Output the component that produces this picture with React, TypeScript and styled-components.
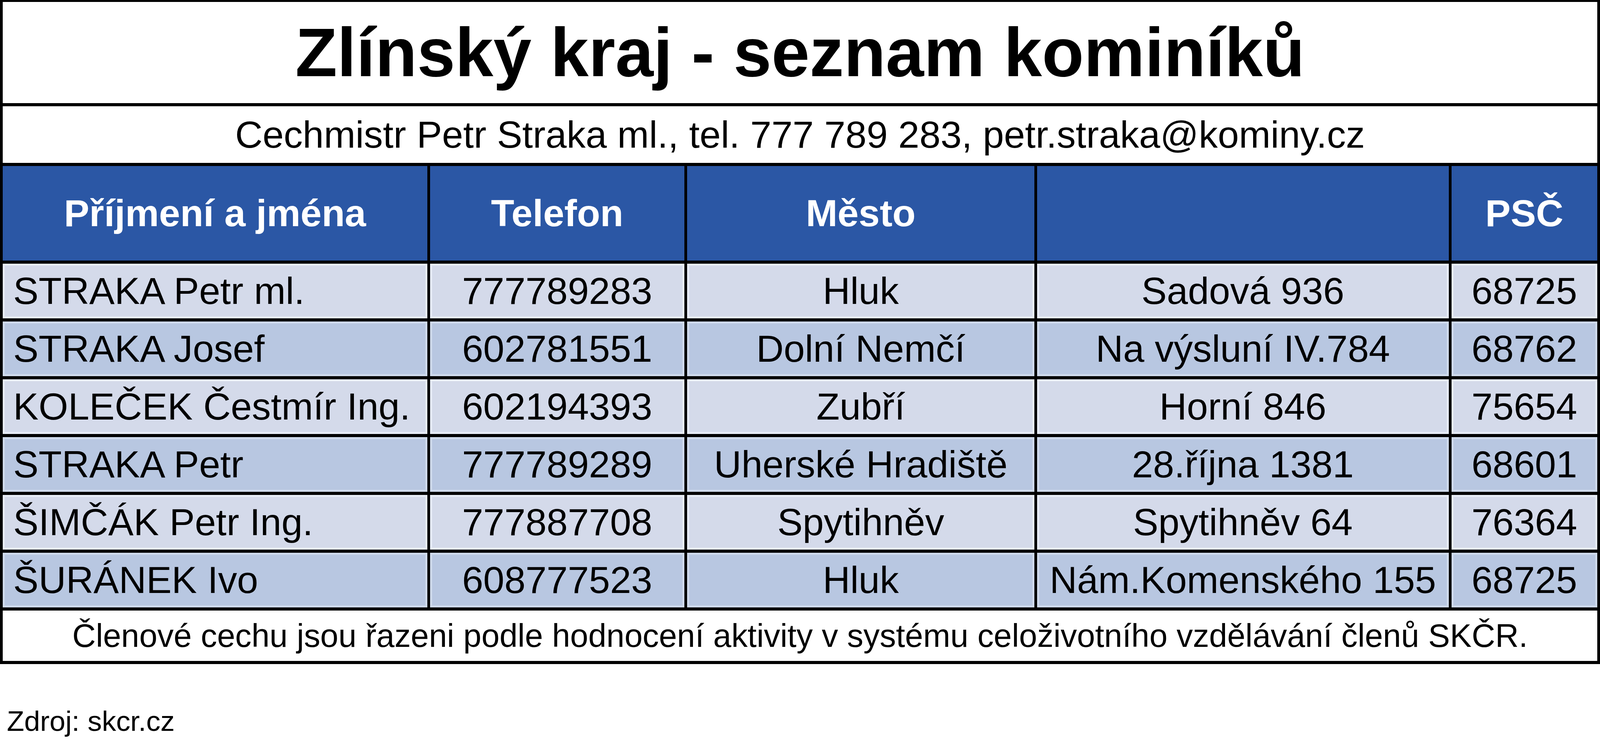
import React from "react";
import styled, { createGlobalStyle } from "styled-components";

// Reference frame is 4715 x 1920; sizes scale with the viewport.
const vw = (px: number) => `${((px / 4715) * 100).toFixed(4)}vw`;
const vh = (px: number) => `${((px / 1920) * 100).toFixed(4)}vh`;

const GlobalStyle = createGlobalStyle`
  html, body {
    margin: 0;
    padding: 0;
    background: #ffffff;
    overflow: hidden;
  }
  body {
    font-family: "Liberation Sans", Arial, Helvetica, sans-serif;
    color: #000000;
  }
`;

const Page = styled.div`
  width: 100vw;
  height: 100vh;
  background: #ffffff;
  overflow: hidden;
`;

const Table = styled.div`
  display: grid;
  grid-template-columns: 1251fr 750fr 1023fr 1213fr 430fr;
  column-gap: ${vw(8)};
  row-gap: ${vh(8)};
  padding: ${vh(5)} ${vw(8)} ${vh(8)} ${vw(8)};
  background: #000000;
  box-sizing: border-box;
  width: 100%;
`;

const WideCell = styled.div<{ $height: number; $size: number; $bold?: boolean }>`
  grid-column: 1 / -1;
  height: ${(p) => vh(p.$height)};
  background: #ffffff;
  display: flex;
  align-items: center;
  justify-content: center;
  font-size: ${(p) => vw(p.$size)};
  font-weight: ${(p) => (p.$bold ? 700 : 400)};
  line-height: 1;
  white-space: nowrap;
  overflow: hidden;
`;

const HeaderCell = styled.div`
  height: ${vh(242)};
  background: #2b57a5;
  color: #ffffff;
  display: flex;
  align-items: center;
  justify-content: center;
  font-size: ${vw(112)};
  font-weight: 700;
  line-height: 1;
  white-space: nowrap;
  overflow: hidden;
`;

const DataCell = styled.div<{ $alt: boolean; $left?: boolean }>`
  height: ${vh(140)};
  background: ${(p) => (p.$alt ? "#b8c7e1" : "#d4daea")};
  box-shadow: inset 0 0 0 ${vw(6)}
    ${(p) => (p.$alt ? "rgba(222, 230, 244, 0.6)" : "rgba(238, 242, 250, 0.75)")};
  display: flex;
  align-items: center;
  justify-content: ${(p) => (p.$left ? "flex-start" : "center")};
  padding-left: ${(p) => (p.$left ? vw(31) : "0")};
  font-size: ${vw(112)};
  line-height: 1;
  white-space: nowrap;
  overflow: hidden;
  box-sizing: border-box;
`;

const Source = styled.div`
  margin-top: ${vh(110)};
  padding-left: ${vw(20)};
  font-size: ${vw(84)};
  line-height: 1;
  white-space: nowrap;
`;

type Row = [string, string, string, string, string];

const rows: Row[] = [
  ["STRAKA Petr ml.", "777789283", "Hluk", "Sadová 936", "68725"],
  ["STRAKA Josef", "602781551", "Dolní Nemčí", "Na výsluní IV.784", "68762"],
  ["KOLEČEK Čestmír Ing.", "602194393", "Zubří", "Horní 846", "75654"],
  ["STRAKA Petr", "777789289", "Uherské Hradiště", "28.října 1381", "68601"],
  ["ŠIMČÁK Petr Ing.", "777887708", "Spytihněv", "Spytihněv 64", "76364"],
  ["ŠURÁNEK Ivo", "608777523", "Hluk", "Nám.Komenského 155", "68725"],
];

const headers = ["Příjmení a jména", "Telefon", "Město", "", "PSČ"];

export default function App() {
  return (
    <Page>
      <GlobalStyle />
      <Table>
        <WideCell $height={259} $size={202} $bold>
          Zlínský kraj - seznam kominíků
        </WideCell>
        <WideCell $height={145} $size={112}>
          Cechmistr Petr Straka ml., tel. 777 789 283, petr.straka@kominy.cz
        </WideCell>
        {headers.map((h, i) => (
          <HeaderCell key={`h${i}`}>{h}</HeaderCell>
        ))}
        {rows.map((r, ri) =>
          r.map((c, ci) => (
            <DataCell key={`${ri}-${ci}`} $alt={ri % 2 === 1} $left={ci === 0}>
              {c}
            </DataCell>
          ))
        )}
        <WideCell $height={129} $size={96}>
          Členové cechu jsou řazeni podle hodnocení aktivity v systému celoživotního vzdělávání členů SKČR.
        </WideCell>
      </Table>
      <Source>Zdroj: skcr.cz</Source>
    </Page>
  );
}
